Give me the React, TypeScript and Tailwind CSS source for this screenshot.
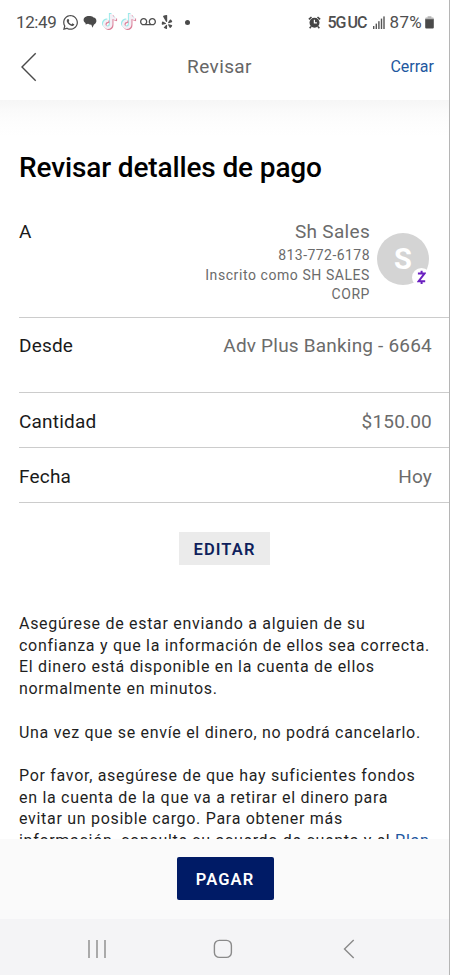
import React from 'react';
import { FaTiktok, FaWhatsapp, FaYelp } from 'react-icons/fa';
import { MdVoicemail } from 'react-icons/md';

type DetailRowProps = {
  label: string;
  value: string;
  className: string;
};

const ChatIcon = () => (
  <svg width="14" height="14" viewBox="0 0 14 14" fill="#4a4a4a">
    <path d="M6 1C2.8 1 0.6 2.6 0.6 5c0 1.4 0.8 2.5 1.9 3.1L2.6 9.4l2.4-0.7c4 0.5 6.8-1.1 6.8-3.9C11.8 2.6 9.2 1 6 1z" />
    <path d="M11 2.6c1.5 0.7 2.4 1.8 2.4 3.4 0 1.6-1 2.8-2.4 3.5l-1.6 3.3-1-3c-1.2 0-2.4-0.4-3.4-1.1l3-3z" />
  </svg>
);

const TiktokIcon = () => (
  <span className="relative block h-[18px] w-[15px]">
    <FaTiktok size={15} className="absolute top-0 left-[-1px] text-[#9beaea]" />
    <FaTiktok size={15} className="absolute top-[2px] left-px text-[#dc7f98]" />
    <FaTiktok size={15} className="absolute top-px left-0 text-[#f3f0f6]" />
  </span>
);

const AlarmIcon = () => (
  <svg width="13" height="13" viewBox="0 0 13 13" fill="none">
    <circle cx="6.5" cy="6.7" r="5" fill="#444444" />
    <path d="M0.9 3.4L3.5 1M12.1 3.4L9.5 1M3 10.6l-1.3 1.7M10 10.6l1.3 1.7" stroke="#444444" strokeWidth="1.6" />
    <path d="M6.4 3.8v3.1h2.5" stroke="#ffffff" strokeWidth="1.2" />
  </svg>
);

const SignalIcon = () => (
  <svg width="12" height="13" viewBox="0 0 12 13" fill="#555555">
    <rect x="0" y="10" width="1.4" height="3" />
    <rect x="2.6" y="7.6" width="1.4" height="5.4" />
    <rect x="5.2" y="5.2" width="1.4" height="7.8" />
    <rect x="7.8" y="2.6" width="1.4" height="10.4" />
    <rect x="10.3" y="0.4" width="1.4" height="12.6" />
  </svg>
);

const BatteryIcon = () => (
  <svg width="9" height="13" viewBox="0 0 9 13">
    <path d="M2.6 0.3h3.8v1.2h1.4q1 0 1 1V4H0.2V2.5q0-1 1-1h1.4z" fill="#b5b5b5" />
    <path d="M0.2 3.2h8.6v8.4q0 1-1 1H1.2q-1 0-1-1z" fill="#4a4a4a" />
  </svg>
);

const StatusBar = () => (
  <div className="flex h-11 items-center justify-between pr-[15px] pl-4 text-[#4f4f4f]">
    <div className="flex items-center">
      <span className="w-[46px] pt-px text-[17px] tracking-[-0.4px]">12:49</span>
      <FaWhatsapp size={17} />
      <span className="ml-[4px]">
        <ChatIcon />
      </span>
      <span className="ml-[5px]">
        <TiktokIcon />
      </span>
      <span className="ml-[4px]">
        <TiktokIcon />
      </span>
      <MdVoicemail size={16} className="ml-[4px]" />
      <FaYelp size={14} className="ml-[4px]" />
      <span className="ml-[11px] h-[5px] w-[5px] rounded-full bg-[#4a4a4a]" />
    </div>
    <div className="flex items-center">
      <AlarmIcon />
      <span className="ml-[6px] pt-px text-[16px] font-medium tracking-[-0.9px]">5G</span>
      <span className="ml-[2px] pt-px text-[16px] font-medium tracking-[-1px]">UC</span>
      <span className="ml-[6px]">
        <SignalIcon />
      </span>
      <span className="ml-[5px] pt-px text-[17px] tracking-[0.3px]">87%</span>
      <span className="ml-[3px]">
        <BatteryIcon />
      </span>
    </div>
  </div>
);

const Header = () => (
  <header className="flex h-14 items-center pr-[15px] pb-[11px] pl-5">
    <button type="button" aria-label="Atrás" className="flex w-20">
      <svg width="17" height="30" viewBox="0 0 17 30" fill="none" stroke="#4a4a4a" strokeWidth="1.4">
        <path d="M15.7 1.2L2 15l13.7 13.8" />
      </svg>
    </button>
    <h1 className="flex-1 pt-[2px] text-center text-[19px] tracking-[0.4px] text-[#666666]">Revisar</h1>
    <button type="button" className="w-[95px] text-right text-[16px] text-[#1e58a0]">
      Cerrar
    </button>
  </header>
);

const DetailRow = ({ label, value, className }: DetailRowProps) => (
  <div className={`ml-[19px] flex justify-between border-b border-[#cccccc] pr-[17px] text-[19px] leading-6 tracking-[0.2px] ${className}`}>
    <span className="text-[#1a1a1a]">{label}</span>
    <span className="text-[#6b6b6b]">{value}</span>
  </div>
);

const Avatar = () => (
  <div className="relative mt-[13px] ml-[7px] flex h-[52px] w-[52px] items-center justify-center rounded-full bg-[#d4d4d4]">
    <span className="pt-[2px] text-[29px] font-bold text-white">S</span>
    <span className="absolute top-[35px] left-[35px] flex h-[19px] w-[19px] items-center justify-center rounded-full bg-white">
      <svg width="9" height="15" viewBox="0 0 9 15" fill="none" stroke="#6a1fc0" strokeWidth="2">
        <path d="M0.9 3.6h6.6L1.6 11.2h6.6M4.6 0.8v2.6M4.6 11.4V14" />
      </svg>
    </span>
  </div>
);

const Recipient = () => (
  <div className="ml-[19px] flex h-[98px] border-b border-[#cccccc] pr-5">
    <span className="flex-1 text-[19px] leading-6 text-[#1a1a1a]">A</span>
    <div className="w-[180px] text-right text-[14px] leading-[19px] tracking-[0.57px] text-[#6b6b6b]">
      <p className="text-[19px] leading-6 tracking-[0.3px]">Sh Sales</p>
      <p className="mt-[2px] tracking-[0.45px]">813-772-6178</p>
      <p className="mt-px">Inscrito como SH SALES CORP</p>
    </div>
    <Avatar />
  </div>
);

const App = () => {
  return (
    <div className="flex h-[975px] w-[450px] flex-col overflow-hidden border-r border-[#b5b5b5] bg-white font-[Roboto,sans-serif]">
      <StatusBar />
      <Header />
      <main className="h-[739px] shrink-0 overflow-hidden bg-[linear-gradient(#f6f6f6,#fafafa_10px,#fdfdfd_22px,#ffffff_36px)]">
        <h2 className="mt-[50px] ml-[19px] text-[28px] leading-[36px] font-medium tracking-[-0.13px] text-black">
          Revisar detalles de pago
        </h2>
        <div className="mt-[34px]">
          <Recipient />
          <DetailRow label="Desde" value="Adv Plus Banking - 6664" className="h-[75px] pt-[16px]" />
          <DetailRow label="Cantidad" value="$150.00" className="h-[55px] pt-[17px]" />
          <DetailRow label="Fecha" value="Hoy" className="h-[55px] pt-[17px]" />
        </div>
        <div className="mt-[29px] flex justify-center">
          <button type="button" className="h-[33px] w-[91px] bg-[#ebebeb] pt-[3px] text-[16.5px] font-semibold tracking-[1.1px] text-[#0f1f5c]">
            EDITAR
          </button>
        </div>
        <div className="mt-[48px] ml-[19px] flex w-[425px] flex-col gap-[21.7px] text-[16px] leading-[21.7px] tracking-[0.7px] text-[#1f1f1f]">
          <p>
            Asegúrese de estar enviando a alguien de su
            <br />
            confianza y que la información de ellos sea correcta.
            <br />
            El dinero está disponible en la cuenta de ellos
            <br />
            normalmente en minutos.
          </p>
          <p>Una vez que se envíe el dinero, no podrá cancelarlo.</p>
          <p>
            Por favor, asegúrese de que hay suficientes fondos
            <br />
            en la cuenta de la que va a retirar el dinero para
            <br />
            evitar un posible cargo. Para obtener más
            <br />
            información, consulte su acuerdo de cuenta y el <a className="text-[#1e58a0]">Plan</a>
          </p>
        </div>
      </main>
      <footer className="flex h-20 shrink-0 justify-center bg-[#fafafa] pt-[18px] pl-px">
        <button type="button" className="h-[43px] w-[97px] rounded-xs bg-[#001b66] pt-[3px] text-[16.5px] font-semibold tracking-[1.1px] text-white">
          PAGAR
        </button>
      </footer>
      <nav className="flex h-14 shrink-0 items-center bg-[#f4f4f6] pt-[3px] pl-[87px]">
        <svg width="20" height="20" viewBox="0 0 20 20" stroke="#8a8a8a" strokeWidth="1.4">
          <path d="M2 1v18M10 1v18M18 1v18" />
        </svg>
        <svg className="ml-[106px]" width="20" height="20" viewBox="0 0 20 20" fill="none" stroke="#8a8a8a" strokeWidth="1.4">
          <rect x="1.4" y="1.4" width="17" height="17" rx="5" />
        </svg>
        <svg className="ml-[110px]" width="12" height="20" viewBox="0 0 12 20" fill="none" stroke="#8a8a8a" strokeWidth="1.4">
          <path d="M10.7 1L1.5 10l9.2 9" />
        </svg>
      </nav>
    </div>
  );
};

export default App;
